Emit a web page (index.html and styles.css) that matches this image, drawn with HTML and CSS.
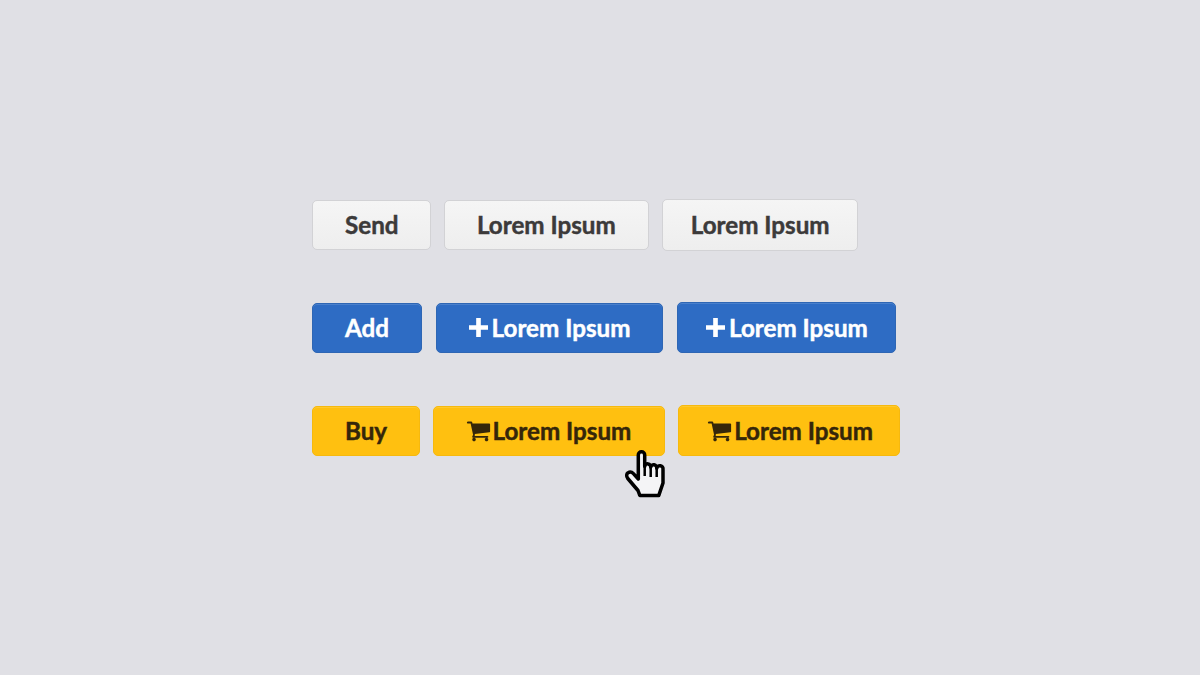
FILE: index.html
```html
<!DOCTYPE html>
<html lang="en">
<head>
    <meta charset="UTF-8">
    <title>Buttons</title>
    <link rel="stylesheet" href="styles.css">
</head>
<body>

    <div class="stage">
        <!-- Default -->
        <div class="row">
            <a class="btn btn-light">Send</a>
            <a class="btn btn-light">Lorem Ipsum</a>
            <a class="btn btn-light btn-hover">Lorem Ipsum</a>
        </div>

        <!-- Primary -->
        <div class="row row-blue">
            <a class="btn btn-blue">Add</a>
            <a class="btn btn-blue">
                <svg class="icon icon-plus" viewBox="0 0 18 18"><path d="M6.800 0h4.400v6.800H18v4.400h-6.800V18H6.800v-6.800H0V6.800h6.800z"/></svg>
                Lorem Ipsum
            </a>
            <a class="btn btn-blue btn-hover">
                <svg class="icon icon-plus" viewBox="0 0 18 18"><path d="M6.800 0h4.400v6.800H18v4.400h-6.800V18H6.800v-6.800H0V6.800h6.800z"/></svg>
                Lorem Ipsum
            </a>
        </div>

        <!-- Buy -->
        <div class="row">
            <a class="btn btn-yellow">Buy</a>
            <a class="btn btn-yellow btn-cursor">
                <svg class="icon icon-cart" viewBox="0 0 1792 1792"><path d="M704 1536q0 52-38 90t-90 38-90-38-38-90 38-90 90-38 90 38 38 90zm896 0q0 52-38 90t-90 38-90-38-38-90 38-90 90-38 90 38 38 90zm128-1088v512q0 24-16.500 44t-40.500 23l-1044 122q13 60 13 70 0 16-24 64h920q26 0 45 19t19 45-19 45-45 19h-1024q-26 0-45-19t-19-45q0-11 8-31.500t16-36 21.500-40 15.500-29.500l-177-823h-204q-26 0-45-19t-19-45 19-45 45-19h256q16 0 28.500 6.500t19.500 15.500 13 24.500 8 26 5.500 29.500 4.500 26h1201q26 0 45 19t19 45z"/></svg>
                Lorem Ipsum
                <svg class="cursor" viewBox="0 0 44 52">
                    <path class="cursor-hand" d="M14.300 31V7a3.200 3.200 0 0 1 6.400 0v11.500a3 3 0 0 1 6 .8a3 3 0 0 1 6 1a3 3 0 0 1 6.300 1.200V35l-4.200 12.400H15.800L14 42.500 3.800 30.500C2 28.300 2.500 25.800 4 24.800c1.800-1.300 3.900-.8 5.400 .8z"/>
                    <path class="cursor-line" d="M20.700 18.500V28M26.700 19.300V29M32.700 20.300V29"/>
                </svg>
            </a>
            <a class="btn btn-yellow btn-hover">
                <svg class="icon icon-cart" viewBox="0 0 1792 1792"><path d="M704 1536q0 52-38 90t-90 38-90-38-38-90 38-90 90-38 90 38 38 90zm896 0q0 52-38 90t-90 38-90-38-38-90 38-90 90-38 90 38 38 90zm128-1088v512q0 24-16.500 44t-40.500 23l-1044 122q13 60 13 70 0 16-24 64h920q26 0 45 19t19 45-19 45-45 19h-1024q-26 0-45-19t-19-45q0-11 8-31.500t16-36 21.500-40 15.500-29.500l-177-823h-204q-26 0-45-19t-19-45 19-45 45-19h256q16 0 28.500 6.500t19.500 15.500 13 24.500 8 26 5.500 29.500 4.500 26h1201q26 0 45 19t19 45z"/></svg>
                Lorem Ipsum
            </a>
        </div>
    </div>

</body>
</html>
```

FILE: styles.css
```css
* {
    margin: 0;
    padding: 0;
    box-sizing: border-box;
}
body {
    width: 1200px;
    height: 675px;
    overflow: hidden;
    background-color: #e0e0e5;
    font-family: 'Lato', sans-serif;
}
.stage {
    display: flex;
    flex-direction: column;
    gap: 53px;
    padding: 200px 0 0 312px;
}
.row {
    display: flex;
    align-items: flex-end;
    gap: 13px;
    height: 50px;
}
.row-blue {
    gap: 14px;
}
.btn {
    display: flex;
    align-items: center;
    height: 50px;
    padding: 0 32px 2px;
    border-radius: 5px;
    border: 1px solid;
    font-size: 24.2px;
    font-weight: 700;
    white-space: nowrap;
    -webkit-text-stroke: 0.45px currentColor;
}
.btn-light:first-child {
    padding-right: 31.4px;
}
.btn-hover {
    height: 51px;
    padding: 0 27px 1px 28px;
}
.btn-light {
    color: #3c3a3a;
    background: linear-gradient(#f5f5f5, #eeeeee);
    border-color: #d2d2d5;
}
.btn-light.btn-hover {
    height: 52px;
    margin-bottom: -1px;
    padding-bottom: 2px;
}
.btn-blue {
    color: #fff;
    background-color: #2e6cc4;
    border-color: #2e66b4;
    box-shadow: inset 0 1px 0 #4a80cc;
}
.btn-yellow {
    color: #35260a;
    background-color: #ffc010;
    border-color: #f6b90e;
    box-shadow: inset 0 1px 0 #ffc92e;
}
.btn-yellow:first-child {
    padding-right: 31.4px;
}
.btn-yellow.btn-hover {
    padding-right: 26.3px;
}
.icon {
    fill: currentColor;
    flex: none;
    stroke: none;
}
.icon-plus {
    width: 19px;
    height: 19px;
    margin-right: 3.6px;
}
.icon-cart {
    width: 25px;
    height: 25px;
    margin-right: 2px;
}
.btn-cursor {
    position: relative;
    padding-right: 32.8px;
}
.cursor {
    position: absolute;
    left: 190px;
    top: 41px;
    width: 44px;
    height: 52px;
    overflow: visible;
}
.cursor-hand {
    fill: #f4f4f6;
    stroke: #000;
    stroke-width: 3.5;
    stroke-linejoin: round;
}
.cursor-line {
    fill: none;
    stroke: #000;
    stroke-width: 2.5;
}
```
